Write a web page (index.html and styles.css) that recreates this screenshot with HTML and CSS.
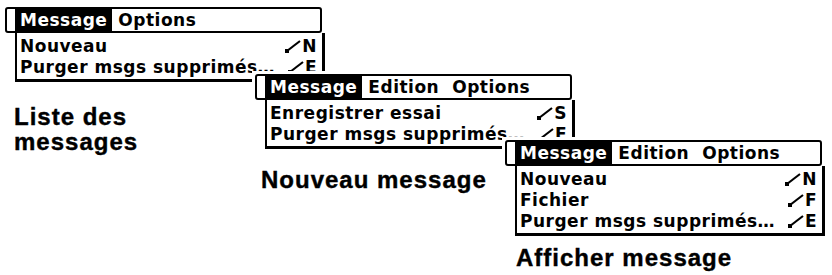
FILE: index.html
```html
<!DOCTYPE html>
<html lang="fr">
<head>
<meta charset="utf-8">
<title>Menus Messagerie</title>
<link rel="stylesheet" href="styles.css">
</head>
<body>
<div class="canvas">
  <section class="shot shot-1">
    <div class="menu">
      <div class="bar"><span class="title on">Message</span><span class="title">Options</span></div>
      <ul class="drop">
        <li><span>Nouveau</span><span class="key"><svg class="cmd" viewBox="0 0 16 13"><rect x="0" y="9" width="4" height="4"/><path d="M2 11 L15 1"/></svg>N</span></li>
        <li><span>Purger msgs supprimés…</span><span class="key"><svg class="cmd" viewBox="0 0 16 13"><rect x="0" y="9" width="4" height="4"/><path d="M2 11 L15 1"/></svg>E</span></li>
      </ul>
    </div>
    <p class="caption">Liste des<br>messages</p>
  </section>
  <section class="shot shot-2">
    <div class="menu">
      <div class="bar"><span class="title on">Message</span><span class="title">Edition</span><span class="title far">Options</span></div>
      <ul class="drop">
        <li><span>Enregistrer essai</span><span class="key"><svg class="cmd" viewBox="0 0 16 13"><rect x="0" y="9" width="4" height="4"/><path d="M2 11 L15 1"/></svg>S</span></li>
        <li><span>Purger msgs supprimés…</span><span class="key"><svg class="cmd" viewBox="0 0 16 13"><rect x="0" y="9" width="4" height="4"/><path d="M2 11 L15 1"/></svg>E</span></li>
      </ul>
    </div>
    <p class="caption">Nouveau message</p>
  </section>
  <section class="shot shot-3">
    <div class="menu">
      <div class="bar"><span class="title on">Message</span><span class="title">Edition</span><span class="title far">Options</span></div>
      <ul class="drop">
        <li><span>Nouveau</span><span class="key"><svg class="cmd" viewBox="0 0 16 13"><rect x="0" y="9" width="4" height="4"/><path d="M2 11 L15 1"/></svg>N</span></li>
        <li><span>Fichier</span><span class="key"><svg class="cmd" viewBox="0 0 16 13"><rect x="0" y="9" width="4" height="4"/><path d="M2 11 L15 1"/></svg>F</span></li>
        <li><span>Purger msgs supprimés…</span><span class="key"><svg class="cmd" viewBox="0 0 16 13"><rect x="0" y="9" width="4" height="4"/><path d="M2 11 L15 1"/></svg>E</span></li>
      </ul>
    </div>
    <p class="caption">Afficher message</p>
  </section>
</div>
</body>
</html>
```
FILE: styles.css
```css
html, body {
  margin: 0;
  background: #fff;
  color: #000;
  font-family: "DejaVu Sans", "Verdana", sans-serif;
}

.canvas {
  display: grid;
  width: 832px;
  height: 275px;
  overflow: hidden;
}

.shot {
  grid-area: 1 / 1;
  align-self: start;
  justify-self: start;
  display: flex;
  flex-direction: column;
  padding: 3px;
  background: #fff;
}

.shot-1 { margin: 4px 0 0 2px; }
.shot-2 { margin: 71px 0 0 252px; }
.shot-3 { margin: 137px 0 0 502px; }

.menu {
  width: 317px;
}

.bar {
  display: flex;
  height: 22px;
  border: 2px solid #000;
  border-radius: 3px;
  padding-left: 8px;
  font-size: 17px;
  font-weight: bold;
  line-height: 22px;
  letter-spacing: 0.5px;
  white-space: nowrap;
}

.title {
  padding: 0 4px;
}

.title.on {
  background: #000;
  color: #fff;
  padding: 0 5px;
}

.title + .title { margin-left: 2px; }
.title.far { margin-left: 5px; }

.drop {
  list-style: none;
  margin: 0 -3px 0 10px;
  padding: 3px 0 1px;
  border: solid #000;
  border-width: 0 3px 3px 2px;
  font-size: 17px;
  font-weight: bold;
  letter-spacing: 0.5px;
  white-space: nowrap;
}

.drop li {
  display: flex;
  justify-content: space-between;
  align-items: center;
  height: 21px;
  line-height: 21px;
  padding: 0 5px 0 3px;
}

.key {
  display: flex;
  align-items: center;
  gap: 1px;
}

.cmd {
  width: 16px;
  height: 13px;
  fill: #000;
}

.cmd path {
  stroke: #000;
  stroke-width: 2.2;
  fill: none;
}

.caption {
  margin: 0;
  font-family: "Liberation Sans", Arial, sans-serif;
  font-weight: bold;
  font-size: 24px;
  line-height: 25px;
  letter-spacing: 1px;
  -webkit-text-stroke: 0.4px #000;
  white-space: nowrap;
}

.shot-1 .caption { margin: 22px 0 0 9px; }
.shot-2 .caption { margin: 18px 0 0 6px; }
.shot-3 .caption { margin: 9px 0 0 11px; }
```
